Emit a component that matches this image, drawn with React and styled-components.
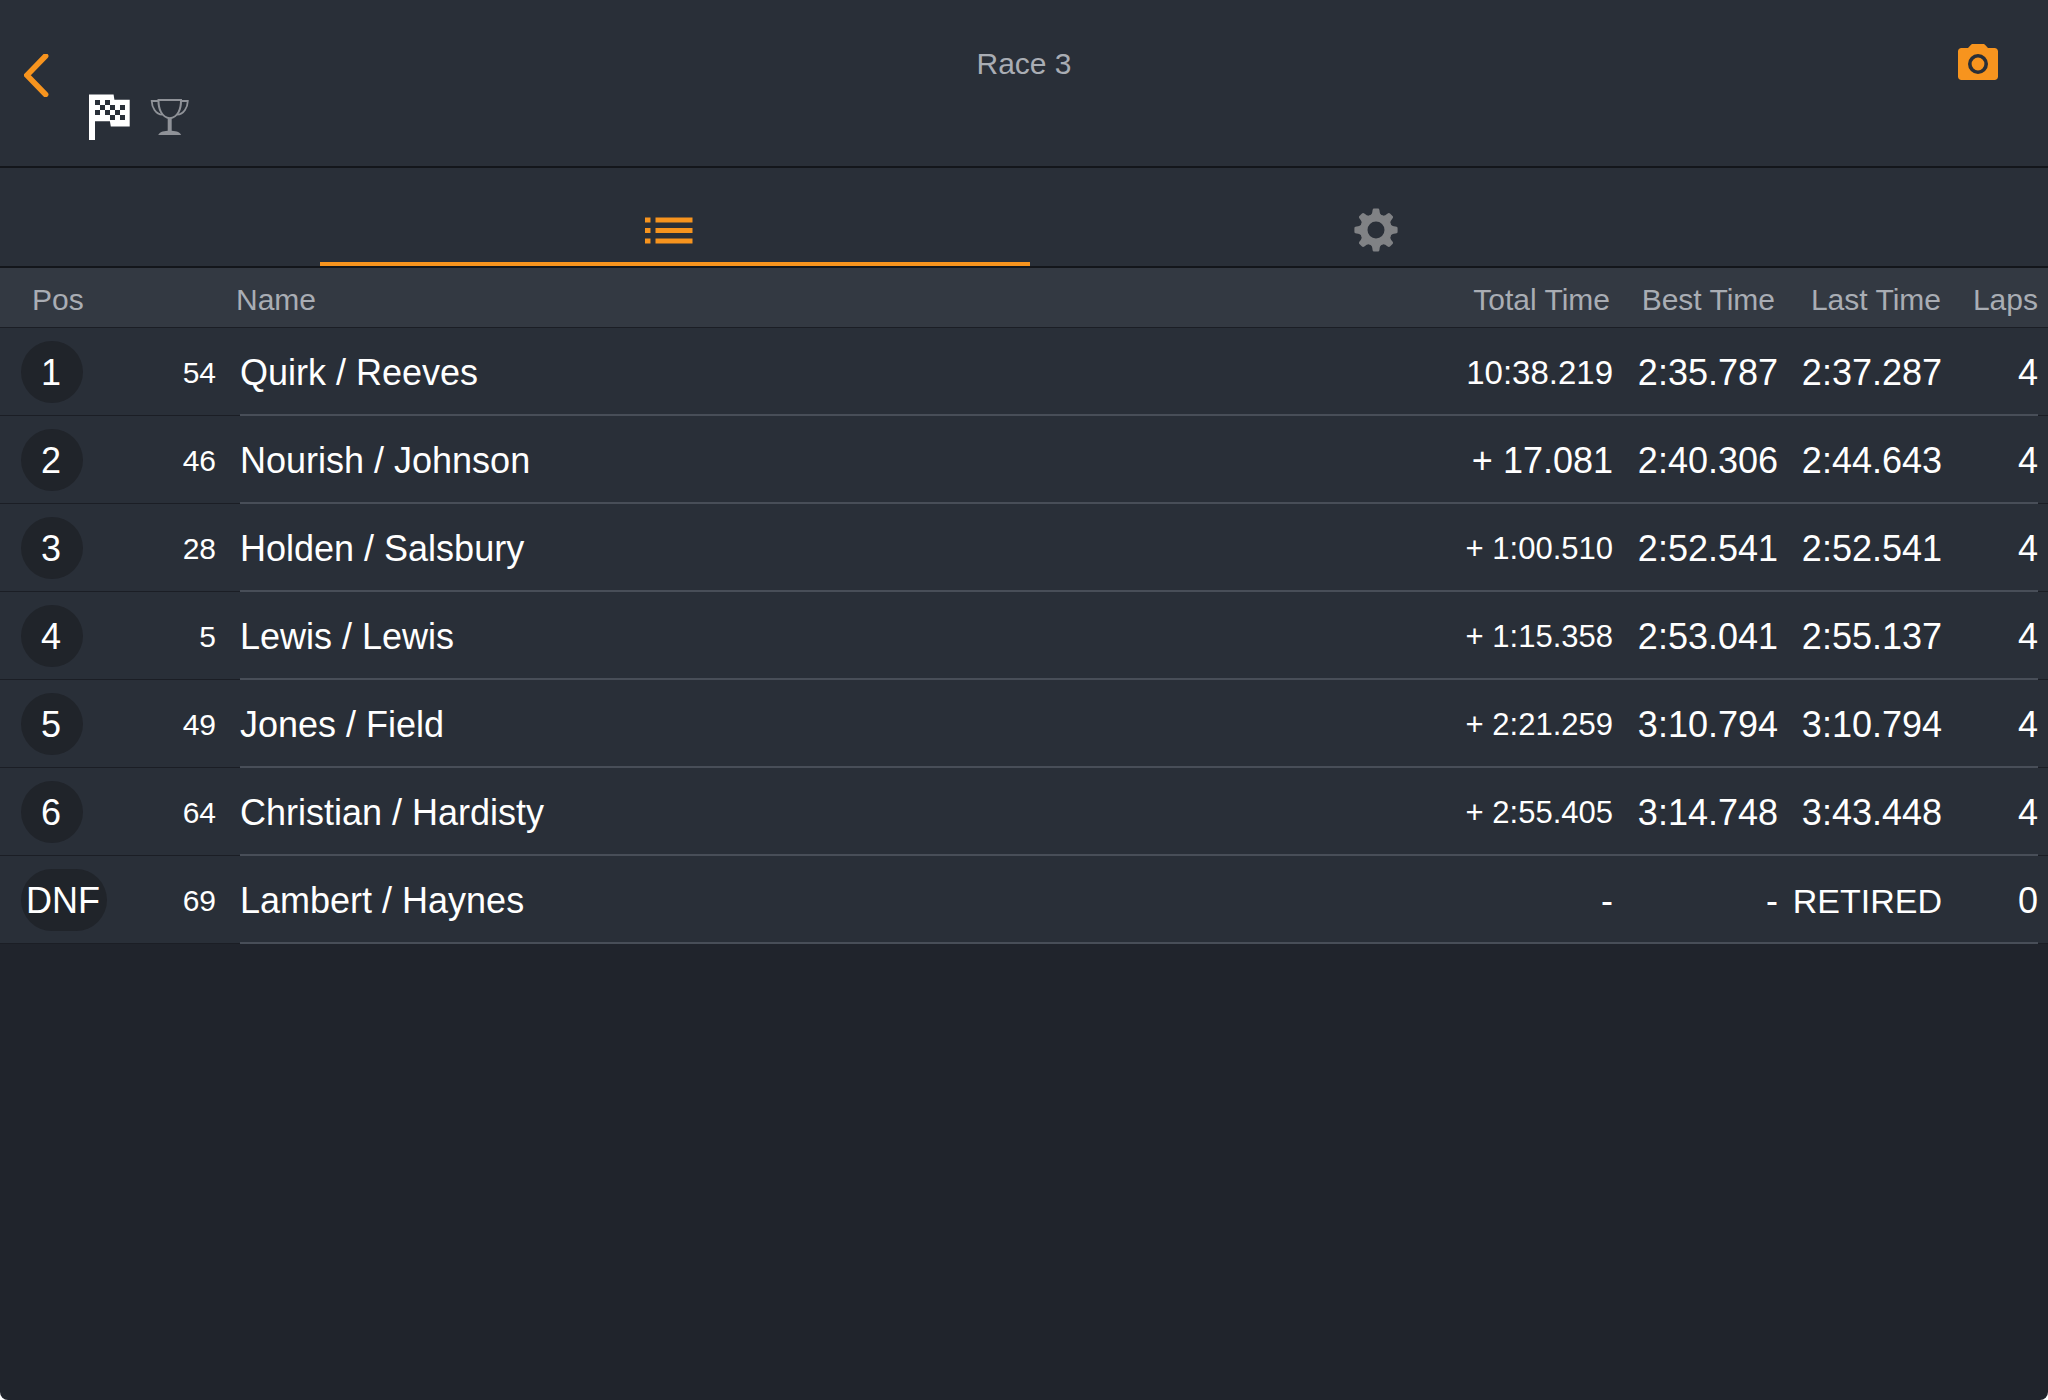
import React from "react";
import styled, { createGlobalStyle } from "styled-components";

const c = {
  bar: "#292f38",
  head: "#333942",
  page: "#20242c",
  line: "#13161b",
  orange: "#f7941e",
  muted: "#a9adb4",
  badge: "#20242a",
};

const Global = createGlobalStyle`
  html { background: #ffffff; }
  body { margin: 0; }
  * { box-sizing: border-box; }
`;

const Screen = styled.div`
  min-height: 100vh;
  background: ${c.page};
  border-radius: 0 0 8px 8px;
  overflow: hidden;
  color: #ffffff;
  font-family: "Liberation Sans", Arial, sans-serif;
`;

const Header = styled.header`
  display: grid;
  grid-template-columns: 1fr auto 1fr;
  align-items: start;
  height: 168px;
  padding: 44px 50px 0 24px;
  background: ${c.bar};
  border-bottom: 2px solid ${c.line};
`;

const HeaderLeft = styled.div`
  display: flex;
  align-items: flex-start;
  padding-top: 10px;
`;

const IconButton = styled.button`
  display: block;
  padding: 0;
  border: 0;
  background: none;
  color: ${c.orange};
  justify-self: end;
  svg { display: block; }
`;

const Status = styled.div`
  display: flex;
  align-items: flex-start;
  gap: 20px;
  padding: 40px 0 0 40px;
  svg { display: block; }
`;

const TrophySlot = styled.span`
  padding-top: 4px;
`;

const Title = styled.h1`
  margin: 0;
  padding-left: 26px;
  font-size: 30px;
  line-height: 40px;
  font-weight: 400;
  color: ${c.muted};
`;

const Tabs = styled.nav`
  display: flex;
  height: 100px;
  padding: 0 314px 0 320px;
  background: ${c.bar};
  border-bottom: 2px solid ${c.line};
`;

const Tab = styled.button`
  position: relative;
  flex: 1;
  display: flex;
  justify-content: center;
  align-items: center;
  padding: 26px 10px 0 0;
  border: 0;
  background: none;
  color: ${(p) => (p.$active ? c.orange : "#808285")};
  svg { display: block; }
  &::after {
    content: "";
    display: ${(p) => (p.$active ? "block" : "none")};
    position: absolute;
    left: 0;
    right: -3px;
    bottom: 0;
    height: 4px;
    background: ${c.orange};
  }
`;

const Table = styled.table`
  width: 100%;
  table-layout: fixed;
  border-collapse: collapse;
`;

const Col = styled.col`
  width: ${(p) => p.$w};
`;

const HeadRow = styled.tr`
  height: 60px;
  background: linear-gradient(#1b1e25, #1b1e25) left bottom / 100% 1px no-repeat ${c.head};
`;

const HeadCell = styled.th`
  padding: 4px ${(p) => p.$end || 0}px 0 ${(p) => p.$start || 0}px;
  text-align: ${(p) => (p.$end ? "right" : "left")};
  font-size: 30px;
  line-height: 34px;
  font-weight: 400;
  color: ${c.muted};
  white-space: nowrap;
`;

const Row = styled.tr`
  height: 88px;
  background:
    linear-gradient(#484e58, #484e58) 240px 100% / calc(100% - 250px) 2px no-repeat,
    linear-gradient(#1b1e25, #1b1e25) left bottom / 100% 1px no-repeat,
    ${c.bar};
`;

const Cell = styled.td`
  padding: 2px ${(p) => p.$end || 0}px 0 ${(p) => p.$start || 0}px;
  text-align: ${(p) => (p.$end ? "right" : "left")};
  font-size: ${(p) => p.$size || 36}px;
  line-height: 40px;
  white-space: nowrap;
`;

const BadgeCell = styled.td`
  padding: 0 0 0 21px;
  font-size: 36px;
`;

const Badge = styled.span`
  display: inline-block;
  min-width: 62px;
  height: 62px;
  padding: 1px 7px 0 5px;
  border-radius: 31px;
  background: ${c.badge};
  line-height: 62px;
  text-align: center;
  vertical-align: middle;
`;

const results = [
  ["1", "54", "Quirk / Reeves", "10:38.219", "2:35.787", "2:37.287", "4", 33],
  ["2", "46", "Nourish / Johnson", "+ 17.081", "2:40.306", "2:44.643", "4", 36],
  ["3", "28", "Holden / Salsbury", "+ 1:00.510", "2:52.541", "2:52.541", "4", 31],
  ["4", "5", "Lewis / Lewis", "+ 1:15.358", "2:53.041", "2:55.137", "4", 31],
  ["5", "49", "Jones / Field", "+ 2:21.259", "3:10.794", "3:10.794", "4", 31],
  ["6", "64", "Christian / Hardisty", "+ 2:55.405", "3:14.748", "3:43.448", "4", 31],
  ["DNF", "69", "Lambert / Haynes", "-", "-", "RETIRED", "0", 36],
];

const BackIcon = () => (
  <svg width="25" height="43" viewBox="0 0 25 43" fill="none" stroke="currentColor" strokeWidth="5.600">
    <path d="M22.200 2 3.500 21.300 22.200 40.500" transform="translate(-.6 0)" strokeLinecap="round" />
  </svg>
);

const checks = [
  [6, 6], [16, 6], [11, 11], [21, 11], [31, 11],
  [6, 16], [16, 16], [26, 16], [21, 21], [31, 21],
];

const FlagIcon = () => (
  <svg width="41" height="46" viewBox="0 0 41 46" role="img" aria-label="Finished">
    <path fill="#ffffff" d="M0 .5h24.600l.8 5.300H40.700V32.500H21.800l-.9-5.300H6V46H0z" />
    {checks.map(([x, y]) => (
      <rect key={x + "-" + y} x={x} y={y} width="5" height="5" fill={c.bar} />
    ))}
  </svg>
);

const TrophyIcon = () => (
  <svg width="40" height="38" viewBox="0 0 40 38" fill="none" stroke="#8f9298" role="img" aria-label="Results">
    <path strokeWidth="2" d="M8.500 2h22.500c.2 9-3 17.200-11.200 18.300C11.600 19.200 8.300 11 8.500 2z" />
    <path strokeWidth="1.800" d="M8.500 3H1.700c.2 6 3.800 13.500 10.600 13.600M31 3h6.800c-.2 6-3.800 13.500-10.600 13.600" />
    <path strokeWidth="4" d="M19.700 20v13" />
    <path stroke="none" fill="#8f9298" d="M8.200 37c2-3.500 6-4.200 11.500-4.200S29.200 33.500 31.200 37z" />
  </svg>
);

const CameraIcon = () => (
  <svg width="40" height="36" viewBox="0 0 40 36" fill="currentColor">
    <path d="M15 0h10c1 0 1.600.3 2.200 1l2.800 3h6.500C38.600 4 40 5.500 40 7.500v25c0 2-1.400 3.500-3.500 3.500h-33C1.400 36 0 34.500 0 32.500v-25C0 5.500 1.400 4 3.500 4H10l2.800-3c.6-.7 1.200-1 2.200-1z" />
    <circle cx="20" cy="20" r="8.200" fill="none" stroke={c.bar} strokeWidth="3.600" />
  </svg>
);

const ListIcon = () => (
  <svg width="48" height="27" viewBox="0 0 48 27" fill="currentColor">
    <path d="M0 .5h5.500v5H0zM10.500.5h37v5h-37zM0 11h5.500v5H0zM10.500 11h37v5h-37zM0 21.500h5.500v5H0zM10.500 21.500h37v5h-37z" />
  </svg>
);

const teeth = [0, 45, 90, 135, 180, 225, 270, 315];

const GearIcon = () => (
  <svg width="44" height="44" viewBox="-22 -22 44 44" fill="currentColor">
    <circle r="12.200" fill="none" stroke="currentColor" strokeWidth="7.400" />
    {teeth.map((a) => (
      <path
        key={a}
        transform={`rotate(${a})`}
        d="M-6.500-14.200C-4.200-15.300-3.700-17-3.500-19.500-3.400-21-2.800-21.600-1.800-21.600H1.800C2.800-21.600 3.400-21 3.500-19.500 3.700-17 4.200-15.300 6.500-14.200z"
      />
    ))}
  </svg>
);

export default function App() {
  return (
    <Screen>
      <Global />
      <Header>
        <HeaderLeft>
          <IconButton type="button" aria-label="Back"><BackIcon /></IconButton>
          <Status>
            <FlagIcon />
            <TrophySlot><TrophyIcon /></TrophySlot>
          </Status>
        </HeaderLeft>
        <Title>Race 3</Title>
        <IconButton type="button" aria-label="Take photo"><CameraIcon /></IconButton>
      </Header>
      <Tabs>
        <Tab type="button" $active aria-label="Results list"><ListIcon /></Tab>
        <Tab type="button" aria-label="Settings"><GearIcon /></Tab>
      </Tabs>
      <Table>
        <colgroup>
          <Col $w="124px" />
          <Col $w="111px" />
          <Col $w="auto" />
          <Col $w="170px" />
          <Col $w="165px" />
          <Col $w="164px" />
          <Col $w="105px" />
        </colgroup>
        <thead>
          <HeadRow>
            <HeadCell $start={32}>Pos</HeadCell>
            <HeadCell aria-label="Number" />
            <HeadCell $start={1}>Name</HeadCell>
            <HeadCell $end={4}>Total Time</HeadCell>
            <HeadCell $end={4}>Best Time</HeadCell>
            <HeadCell $end={2}>Last Time</HeadCell>
            <HeadCell $end={10}>Laps</HeadCell>
          </HeadRow>
        </thead>
        <tbody>
          {results.map(([pos, num, name, total, best, last, laps, size]) => (
            <Row key={num}>
              <BadgeCell><Badge>{pos}</Badge></BadgeCell>
              <Cell $end={19} $size={30}>{num}</Cell>
              <Cell $start={5}>{name}</Cell>
              <Cell $end={1} $size={size}>{total}</Cell>
              <Cell $end={1}>{best}</Cell>
              <Cell $end={1} $size={last === "RETIRED" ? 34 : 36}>{last}</Cell>
              <Cell $end={10}>{laps}</Cell>
            </Row>
          ))}
        </tbody>
      </Table>
    </Screen>
  );
}
